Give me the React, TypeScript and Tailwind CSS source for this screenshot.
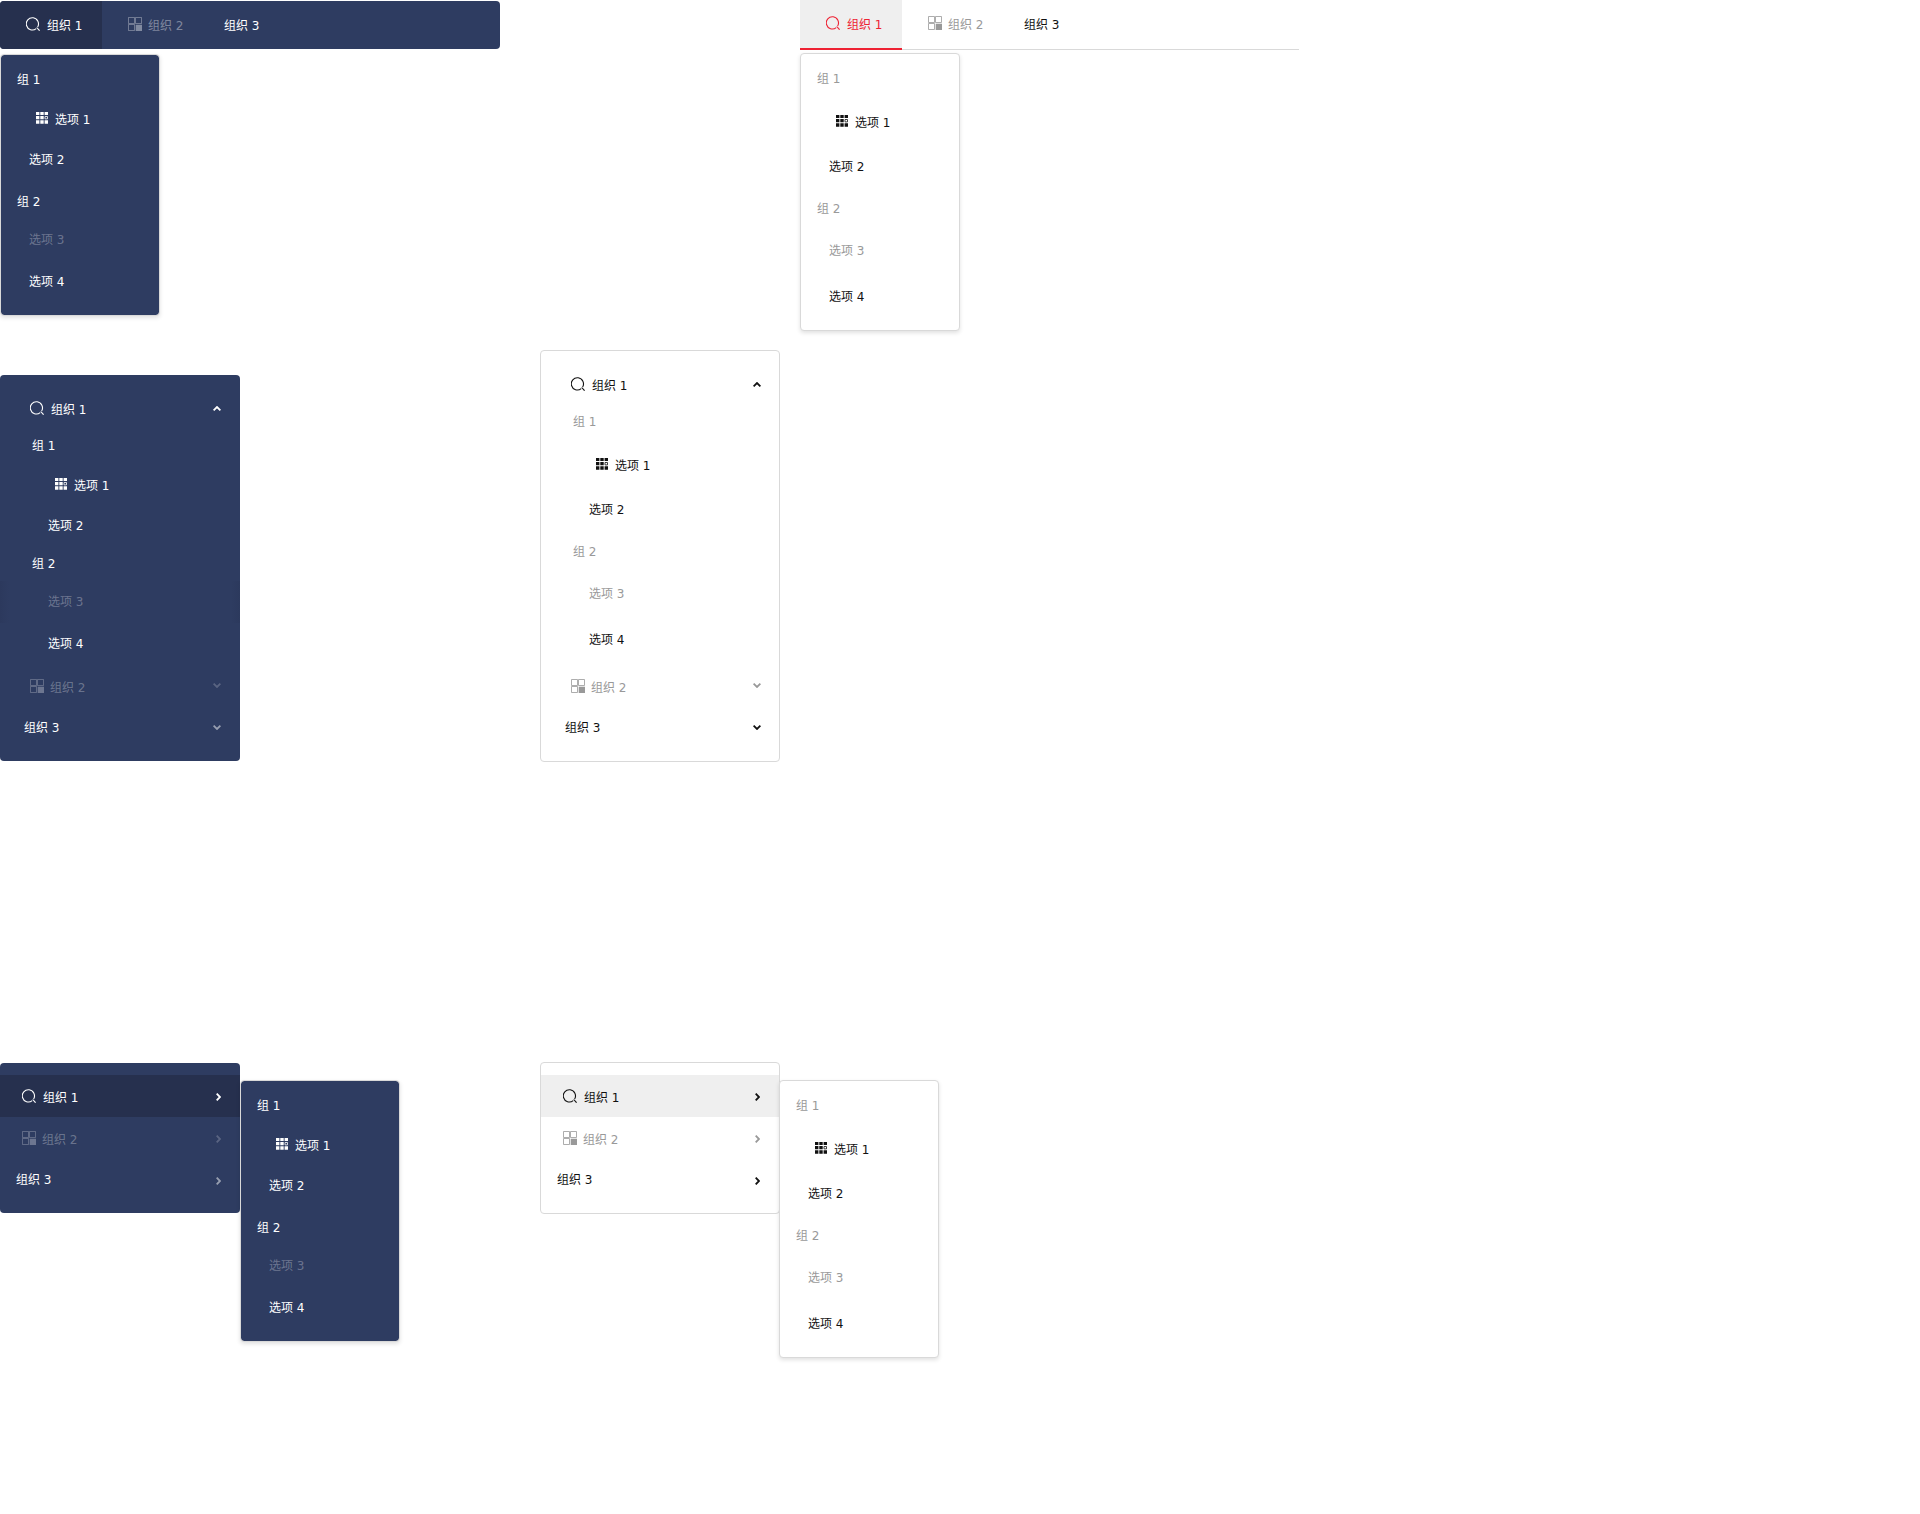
import React from "react";

type Theme = "dark" | "light";

const SearchIcon = () => (
  <svg width="14" height="14" viewBox="0 0 14 14" fill="none" stroke="currentColor" strokeWidth="1.1" className="mt-[3px] shrink-0">
    <path d="M10.2 11.6A6.1 6.1 0 1 1 11.6 10" />
    <path d="M10.7 10.5L13.6 13.7" />
  </svg>
);

const TilesIcon = () => (
  <svg width="14" height="14" viewBox="0 0 14 14" fill="none" stroke="currentColor" strokeWidth="1" className="mt-[3px] shrink-0">
    <path d="M.5.5h6v6h-6zM7.5.5h6v6h-6zM.5 7.5h6v6h-6z" strokeOpacity="0.8" />
    <path d="M7.7 7.7H14V14H7.7z" fill="currentColor" stroke="none" />
  </svg>
);

const GridIcon = () => (
  <svg width="12" height="12" viewBox="0 0 12 12" fill="currentColor" className="mt-[4px] shrink-0">
    <path d="M0 0h3.4v3.1H0zM4.3 0h3.4v3.1H4.3zM8.6 0H12v3.1H8.6zM0 4.1h3.4v3.2H0zM4.3 4.1h3.4v3.2H4.3zM0 8.3h3.4v3.5H0zM4.3 8.3h3.4v3.5H4.3zM8.6 8.3H12v3.5H8.6z" />
    <path d="M9 4.5h2.5v2.4H9z" fill="none" stroke="currentColor" strokeWidth="0.8" />
  </svg>
);

const Chevron = ({ d, className }: { d: "up" | "down" | "right"; className: string }) =>
  d === "right" ? (
    <svg width="5" height="8" viewBox="0 0 5 8" fill="none" stroke="currentColor" strokeWidth="1.8" className={"ml-auto shrink-0 " + className}>
      <path d="M.7.6L4 4L.7 7.4" />
    </svg>
  ) : (
    <svg width="8" height="5" viewBox="0 0 8 5" fill="none" stroke="currentColor" strokeWidth="1.8" className={"ml-auto shrink-0 " + className}>
      <path d={d === "up" ? "M.6 4.3L4 1L7.4 4.3" : "M.6 .7L4 4L7.4 .7"} />
    </svg>
  );

const Row = ({ className, children }: { className: string; children: React.ReactNode }) => (
  <div className={"flex h-6 items-start leading-6 whitespace-pre " + className}>{children}</div>
);

const colors = {
  dark: { text: "text-white", group: "text-white", off: "text-white/30", offTop: "text-white/40" },
  light: { text: "text-[#111]", group: "text-[#999]", off: "text-[#999]", offTop: "text-[#999]" },
};

function Popup({ theme, className }: { theme: Theme; className: string }) {
  const c = colors[theme];
  const dark = theme === "dark";
  return (
    <div
      className={
        "w-[160px] shrink-0 rounded-[4px] border border-[#d9d9d9] pt-[13px] shadow-[0_2px_4px_rgba(0,0,0,0.12)] " +
        (dark ? "h-[262px] bg-[#2e3c61] bg-clip-padding " : "h-[278px] bg-white ") +
        className
      }
    >
      <Row className={"pl-[16px] " + c.group}>组 1</Row>
      <Row className={"pl-[35px] " + c.text + (dark ? " mt-[16px]" : " mt-[20px]")}>
        <GridIcon />
        <span className="ml-[7px]">选项 1</span>
      </Row>
      <Row className={"pl-[28px] " + c.text + (dark ? " mt-[16px]" : " mt-[20px]")}>选项 2</Row>
      <Row className={"mt-[18px] pl-[16px] " + c.group}>组 2</Row>
      <Row className={"pl-[28px] " + c.off + (dark ? " mt-[14px]" : " mt-[18px]")}>选项 3</Row>
      <Row className={"pl-[28px] " + c.text + (dark ? " mt-[18px]" : " mt-[22px]")}>选项 4</Row>
    </div>
  );
}

function TopNav({ theme }: { theme: Theme }) {
  const dark = theme === "dark";
  const c = colors[theme];
  return (
    <div
      className={
        "flex items-start overflow-hidden " +
        (dark ? "mt-px h-[48px] w-[500px] rounded-[4px] bg-[#2e3c61]" : "h-[50px] w-[499px] bg-[linear-gradient(#d9d9d9,#d9d9d9)] bg-[length:100%_1px] bg-[position:0_49px] bg-no-repeat")
      }
    >
      <div
        className={
          "w-[102px] pl-[26px] " +
          (dark ? "h-[48px] bg-[#26304e] pt-[13px] text-white" : "h-[50px] border-b-2 border-[#ee2233] bg-[#efefef] pt-[13px] text-[#ee2233]")
        }
      >
        <Row className="">
          <SearchIcon />
          <span className="ml-[7px]">组织 1</span>
        </Row>
      </div>
      <Row className={"mt-[13px] w-[122px] pl-[26px] " + c.offTop}>
        <TilesIcon />
        <span className="ml-[6px]">组织 2</span>
      </Row>
      <Row className={"mt-[13px] " + c.text}>组织 3</Row>
    </div>
  );
}

function Accordion({ theme }: { theme: Theme }) {
  const dark = theme === "dark";
  const c = colors[theme];
  return (
    <div
      className={
        "w-[240px] shrink-0 rounded-[4px] " +
        (dark ? "mt-[25px] h-[386px] bg-[#2e3c61] pr-[19px] pt-[23px]" : "h-[412px] border border-[#d9d9d9] bg-white pr-[18px] pt-[23px]")
      }
    >
      <Row className={"pl-[30px] " + c.text}>
        <SearchIcon />
        <span className="ml-[7px]">组织 1</span>
        <Chevron d="up" className="mt-[8px]" />
      </Row>
      <Row className={"mt-[12px] pl-[32px] " + c.group}>组 1</Row>
      <Row className={"pl-[55px] " + c.text + (dark ? " mt-[16px]" : " mt-[20px]")}>
        <GridIcon />
        <span className="ml-[7px]">选项 1</span>
      </Row>
      <Row className={"pl-[48px] " + c.text + (dark ? " mt-[16px]" : " mt-[20px]")}>选项 2</Row>
      <Row className={"pl-[32px] " + c.group + (dark ? " mt-[14px]" : " mt-[18px]")}>组 2</Row>
      {dark ? (
        <div className="-mr-[19px] mt-[5px] h-[42px] bg-[linear-gradient(90deg,#2c395d,#2e3c61_9px,#2e3c61_231px,#2c395d)] pt-[9px]">
          <Row className={"pl-[48px] " + c.off}>选项 3</Row>
        </div>
      ) : (
        <Row className={"mt-[18px] pl-[48px] " + c.off}>选项 3</Row>
      )}
      <Row className={"pl-[48px] " + c.text + (dark ? " mt-[9px]" : " mt-[22px]")}>选项 4</Row>
      <Row className={"pl-[30px] " + c.off + (dark ? " mt-[20px]" : " mt-[24px]")}>
        <TilesIcon />
        <span className="ml-[6px]">组织 2</span>
        <Chevron d="down" className={"mt-[7px]" + (dark ? " opacity-70" : "")} />
      </Row>
      <Row className={"mt-[16px] pl-[24px] " + c.text}>
        <span>组织 3</span>
        <Chevron d="down" className={"mt-[9px]" + (dark ? " opacity-50" : "")} />
      </Row>
    </div>
  );
}

function SideMenu({ theme }: { theme: Theme }) {
  const dark = theme === "dark";
  const c = colors[theme];
  return (
    <div
      className={
        "w-[240px] shrink-0 rounded-[4px] " +
        (dark ? "mt-px h-[150px] bg-[#2e3c61] pt-[12px]" : "h-[152px] border border-[#d9d9d9] bg-white pt-[12px]")
      }
    >
      <div className={"h-[42px] pl-[22px] pr-[19px] pt-[11px] " + (dark ? "bg-[#26304e]" : "bg-[#efefef]")}>
        <Row className={c.text}>
          <SearchIcon />
          <span className="ml-[7px]">组织 1</span>
          <Chevron d="right" className="mt-[7px]" />
        </Row>
      </div>
      <div className="pt-[11px] pr-[19px]">
        <Row className={"pl-[22px] " + c.off}>
          <TilesIcon />
          <span className="ml-[6px]">组织 2</span>
          <Chevron d="right" className={"mt-[7px]" + (dark ? " opacity-70" : "")} />
        </Row>
        <Row className={"mt-[16px] pl-[16px] " + c.text}>
          <span>组织 3</span>
          <Chevron d="right" className={"mt-[9px]" + (dark ? " opacity-50" : "")} />
        </Row>
      </div>
    </div>
  );
}

export default function App() {
  return (
    <main className="h-[1514px] w-[1920px] overflow-hidden bg-white font-['DejaVu_Sans','Noto_Sans_CJK_SC',sans-serif] text-[12px]">
      <section className="flex h-[350px]">
        <div className="w-[800px]">
          <TopNav theme="dark" />
          <Popup theme="dark" className="mt-[5px]" />
        </div>
        <div>
          <TopNav theme="light" />
          <Popup theme="light" className="mt-[3px]" />
        </div>
      </section>
      <section className="flex h-[712px] items-start gap-[300px]">
        <Accordion theme="dark" />
        <Accordion theme="light" />
      </section>
      <section className="flex items-start">
        <div className="flex w-[540px] items-start">
          <SideMenu theme="dark" />
          <Popup theme="dark" className="mt-[18px]" />
        </div>
        <SideMenu theme="light" />
        <Popup theme="light" className="-ml-px mt-[18px]" />
      </section>
    </main>
  );
}
